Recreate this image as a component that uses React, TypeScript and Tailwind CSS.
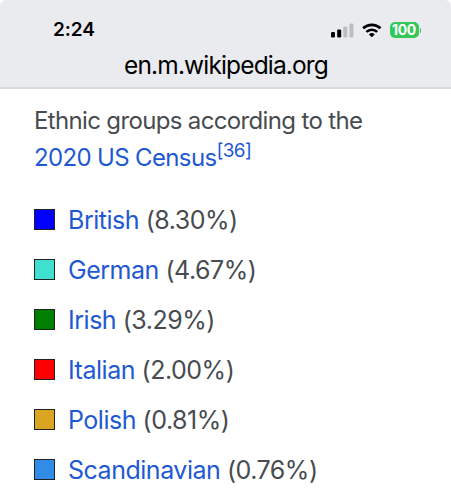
interface EthnicGroup {
  name: string;
  percent: string;
  swatch: string;
}

const GROUPS: EthnicGroup[] = [
  { name: "British", percent: "8.30%", swatch: "bg-[#0000ff]" },
  { name: "German", percent: "4.67%", swatch: "bg-[#40e0d0]" },
  { name: "Irish", percent: "3.29%", swatch: "bg-[#008000]" },
  { name: "Italian", percent: "2.00%", swatch: "bg-[#ff0000]" },
  { name: "Polish", percent: "0.81%", swatch: "bg-[#daa520]" },
  { name: "Scandinavian", percent: "0.76%", swatch: "bg-[#318ce7]" },
];

function SignalIcon() {
  return (
    <svg width="23" height="15" viewBox="0 0 23 15" aria-hidden="true">
      <rect x="0" y="9" width="4" height="5.4" rx="1.2" fill="#000" />
      <rect x="6.2" y="6.4" width="4" height="8" rx="1.2" fill="#000" />
      <rect x="12.3" y="3.4" width="4" height="11" rx="1.2" fill="#bcbdc1" />
      <rect x="18.4" y="0.4" width="4" height="14" rx="1.2" fill="#bcbdc1" />
    </svg>
  );
}

function WifiIcon() {
  return (
    <svg width="20" height="15" viewBox="0 0 20 15" aria-hidden="true">
      <g fill="none" stroke="#000" strokeWidth="2.7">
        <path d="M1.1 5.3a12.6 12.6 0 0 1 17.4 0" />
        <path d="M4.4 8.9a7.8 7.8 0 0 1 10.8 0" />
      </g>
      <path d="M9.8 14.3 6.9 11.4a4.2 4.2 0 0 1 5.8 0z" fill="#000" />
    </svg>
  );
}

function Battery() {
  return (
    <div className="flex items-center">
      <div className="flex h-4 w-[29px] items-center justify-center rounded-[5px] bg-[#34c759] text-[14px] leading-none font-bold tracking-[-0.3px] text-white">
        100
      </div>
      <div className="ml-px h-[5px] w-[1.5px] rounded-r-full bg-[#34c759]" />
    </div>
  );
}

function BrowserHeader() {
  return (
    <div className="rounded-t-[6px] border-b-2 border-[#d9dadd] bg-[#eaebef] text-black">
      <div className="flex h-[52px] items-start justify-between pt-[18px] pr-[30px] pl-[53px]">
        <span className="text-[19px] leading-6 font-semibold tracking-[-0.1px]">2:24</span>
        <div className="flex items-center pt-1">
          <SignalIcon />
          <span className="ml-2">
            <WifiIcon />
          </span>
          <span className="ml-2">
            <Battery />
          </span>
        </div>
      </div>
      <div className="h-[35px] pl-px text-center text-[24.5px] leading-[26px] tracking-[-0.85px]">
        en.m.wikipedia.org
      </div>
    </div>
  );
}

export default function App() {
  return (
    <div className="h-[500px] w-full overflow-hidden bg-white font-['Inter',sans-serif]">
      <BrowserHeader />
      <main className="pt-[13px] pl-[34px] text-[#484b4f]">
        <p className="text-[24px] leading-[37px] tracking-[-0.65px]">
          Ethnic groups according to the
          <br />
          <a className="text-[#1f59d2]">2020 US Census</a>
          <sup className="-top-[9px] text-[19px] leading-none text-[#1f59d2]">[36]</sup>
        </p>
        <ul className="mt-5 text-[25px] tracking-[-0.48px]">
          {GROUPS.map((group) => (
            <li key={group.name} className="flex h-[50px] items-center whitespace-pre">
              <span className={`mr-[13px] mb-[3px] size-[21px] border border-[#202122] ${group.swatch}`} />
              <a className="text-[#1f59d2]">{group.name}</a>
              <span> ({group.percent})</span>
            </li>
          ))}
        </ul>
      </main>
    </div>
  );
}
